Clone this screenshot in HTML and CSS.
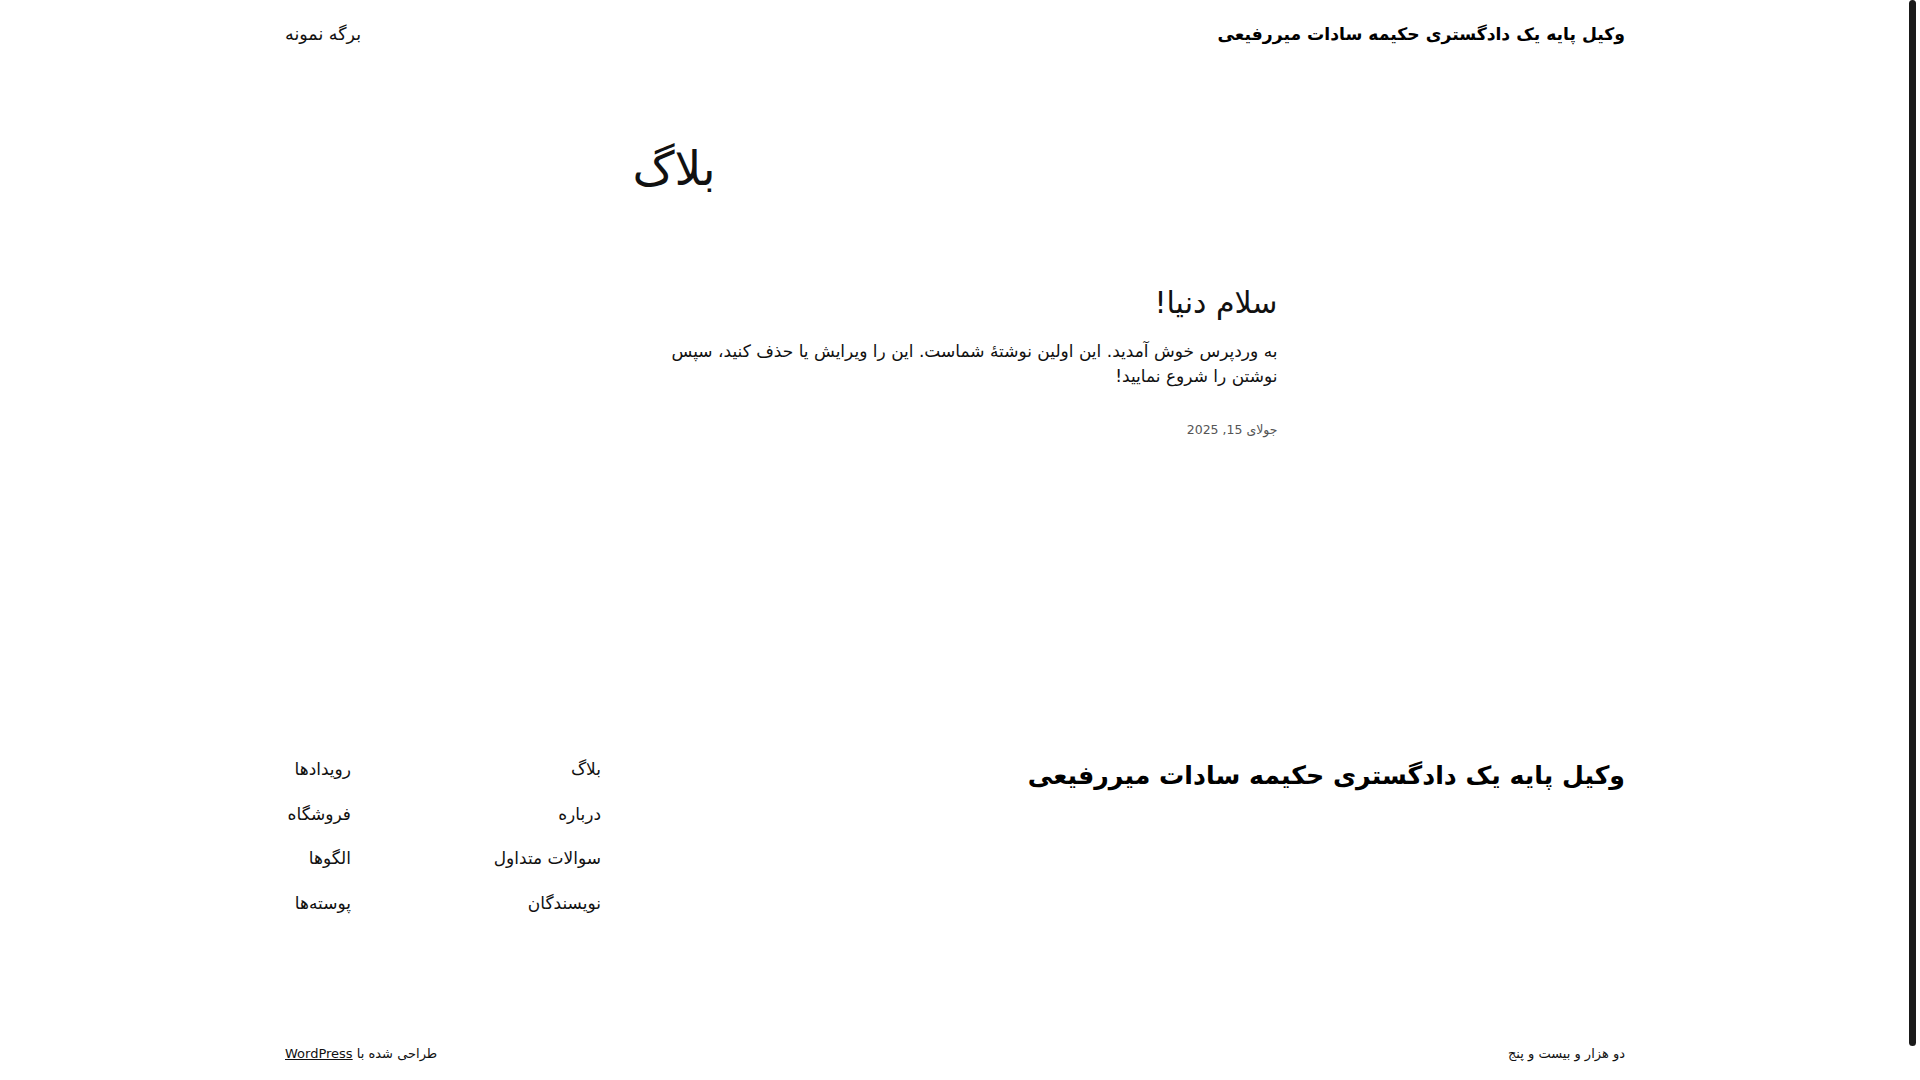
FILE: index.html
```html
<!DOCTYPE html>
<html lang="fa" dir="rtl">
<head>
<meta charset="utf-8">
<title>بلاگ</title>
<link rel="stylesheet" href="styles.css">
</head>
<body>
<div class="site">
  <header class="site-header">
    <a class="site-title" href="#">وکیل پایه یک دادگستری حکیمه سادات میررفیعی</a>
    <nav class="header-nav"><a href="#">برگه نمونه</a></nav>
  </header>

  <main class="main">
    <div class="column">
      <h1 class="archive-title">بلاگ</h1>
      <article class="post">
        <h2 class="post-title"><a href="#">سلام دنیا!</a></h2>
        <p class="post-excerpt">به وردپرس خوش آمدید. این اولین نوشتهٔ شماست. این را ویرایش یا حذف کنید، سپس نوشتن را شروع نمایید!</p>
        <div class="post-date">جولای 15, 2025</div>
      </article>
    </div>
  </main>

  <footer class="site-footer">
    <div class="footer-top">
      <a class="footer-title" href="#">وکیل پایه یک دادگستری حکیمه سادات میررفیعی</a>
      <div class="footer-nav">
        <ul class="nav-col nav-col-1">
          <li><a href="#">بلاگ</a></li>
          <li><a href="#">درباره</a></li>
          <li><a href="#">سوالات متداول</a></li>
          <li><a href="#">نویسندگان</a></li>
        </ul>
        <ul class="nav-col nav-col-2">
          <li><a href="#">رویدادها</a></li>
          <li><a href="#">فروشگاه</a></li>
          <li><a href="#">الگوها</a></li>
          <li><a href="#">پوسته‌ها</a></li>
        </ul>
      </div>
    </div>
    <div class="footer-bottom">
      <span class="copyright">دو هزار و بیست و پنج</span>
      <span class="credit">طراحی شده با <a href="#">WordPress</a></span>
    </div>
  </footer>
</div>
<div class="fake-scrollbar" aria-hidden="true"><div class="fake-thumb"></div></div>
</body>
</html>
```

FILE: styles.css
```css
html, body {
  margin: 0;
  padding: 0;
  background: #ffffff;
}
body {
  direction: rtl;
  font-family: "DejaVu Sans", "Noto Sans", sans-serif;
  color: #111111;
  padding-right: 10px;
}
a {
  color: inherit;
  text-decoration: none;
}
.site {
  width: 1340px;
  margin: 0 auto;
  padding-bottom: 8px;
}
.site-header {
  height: 68px;
  display: flex;
  justify-content: space-between;
  align-items: center;
}
.site-title {
  font-size: 17.2px;
  font-weight: bold;
  color: #000;
}
.header-nav {
  font-size: 17.5px;
}
.column {
  width: 645px;
  margin: 0 auto;
}
.archive-title {
  margin: 68px 0 0;
  font-size: 47px;
  line-height: 65px;
  font-weight: normal;
  text-align: left;
}
.post {
  margin-top: 84px;
}
.post-title {
  margin: 0;
  font-size: 30px;
  line-height: 36px;
  font-weight: normal;
}
.post-excerpt {
  margin: 18px 0 0;
  font-size: 17px;
  line-height: 25px;
}
.post-date {
  margin-top: 31px;
  font-size: 12.5px;
  line-height: 20px;
  color: #555;
}
.site-footer {
  margin-top: 316px;
}
.footer-top {
  display: flex;
  justify-content: space-between;
  align-items: flex-start;
}
.footer-title {
  font-size: 25.2px;
  line-height: 36px;
  font-weight: bold;
  color: #000;
  margin-top: 2px;
}
.footer-nav {
  display: flex;
  margin-top: 1px;
}
.nav-col {
  list-style: none;
  margin: 0;
  padding: 0;
  display: flex;
  flex-direction: column;
  gap: 19.6px;
  font-size: 17px;
  line-height: 25px;
}
.nav-col-1 {
  width: 250px;
}
.nav-col-2 {
  width: 66px;
}
.footer-bottom {
  margin-top: 128px;
  display: flex;
  justify-content: space-between;
  align-items: center;
  font-size: 13px;
  line-height: 20px;
}
.credit a {
  text-decoration: underline;
}
.fake-scrollbar {
  position: fixed;
  top: 0;
  right: 0;
  width: 15px;
  height: 100%;
  background: #ffffff;
}
.fake-thumb {
  margin: 0 auto;
  width: 7px;
  height: 1046px;
  background: #1a1a1a;
  border-radius: 4px;
}
```
